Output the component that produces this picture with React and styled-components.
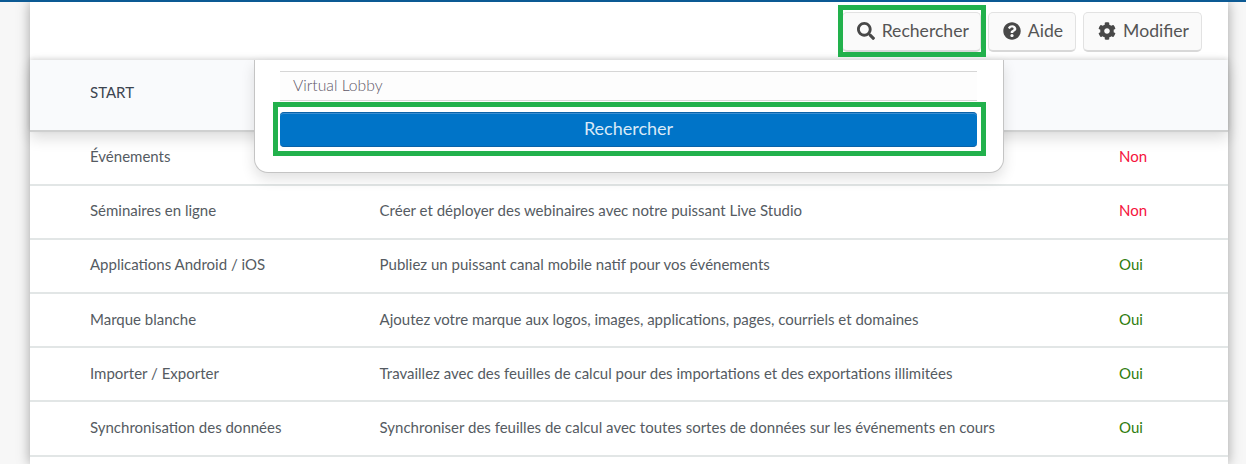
import React from 'react';
import styled, { createGlobalStyle } from 'styled-components';
import { FaSearch, FaQuestionCircle, FaCog } from 'react-icons/fa';

const GlobalStyle = createGlobalStyle`
    html, body {
        margin: 0;
        height: 100%;
        overflow: hidden;
        background: #f7f7f7;
        font-family: Lato, "Open Sans", sans-serif;
    }
`;

const Page = styled.div`
    width: 1246px;
    height: 464px;
    overflow: hidden;
    border-top: 2px solid #0c5a94;
    box-sizing: border-box;
    padding-left: 30px;
`;

const Card = styled.div`
    position: relative;
    width: 1198px;
    height: 462px;
    background: #fff;
    box-shadow: 0 0 12px rgba(0, 0, 0, 0.35);
`;

const Toolbar = styled.div`
    height: 58px;
    box-sizing: border-box;
    display: flex;
    justify-content: flex-end;
    align-items: flex-start;
    gap: 7px;
    padding: 10px 26px 0 0;
`;

const ToolButton = styled.button`
    height: 40px;
    padding: 0 ${(p) => (p.$compact ? '11px' : '12px')} 2px 14px;
    display: flex;
    align-items: center;
    gap: 7px;
    font: 17.6px Lato, sans-serif;
    color: #555;
    background: #fafafa;
    border: 1px solid #e2e2e2;
    border-bottom: 2px solid #d8d8d8;
    border-radius: 5px;
    svg {
        font-size: 18px;
        color: #484848;
    }
`;

const SearchHighlight = styled.div`
    position: absolute;
    left: 808px;
    top: 3px;
    width: 148px;
    height: 52px;
    border: 5px solid #22b14c;
    box-sizing: border-box;
    pointer-events: none;
`;

const HeadRow = styled.div`
    height: 71.5px;
    box-sizing: border-box;
    display: flex;
    align-items: center;
    padding: 0 0 5px 60px;
    font-size: 15px;
    color: #3c4450;
    background: #f9fafc;
    border-bottom: 2px solid #cfd0d0;
    box-shadow: 0 -2px 4px rgba(0, 0, 0, 0.1), 0 6px 14px rgba(0, 0, 0, 0.14);
    position: relative;
`;

const Row = styled.div`
    height: 54.2px;
    box-sizing: border-box;
    display: grid;
    grid-template-columns: 289.6px 739.4px 1fr;
    align-items: center;
    padding: 0 0 3px 60px;
    font-size: 15px;
    color: #555b62;
    border-bottom: 2px solid #e2e6e6;
`;

const Status = styled.span`
    color: ${(p) => (p.$yes ? '#2f7d0e' : '#f5143c')};
`;

const Popup = styled.div`
    position: absolute;
    left: 224px;
    top: 58px;
    width: 750px;
    height: 113px;
    box-sizing: border-box;
    padding: 11px 26px 0 25px;
    background: #fff;
    border: 1px solid #c4c4c4;
    border-top: none;
    border-radius: 0 0 14px 14px;
    box-shadow: 0 6px 14px rgba(0, 0, 0, 0.12);
`;

const LobbyField = styled.div`
    height: 30px;
    box-sizing: border-box;
    padding: 0 0 2px 13px;
    display: flex;
    align-items: center;
    font-size: 15.7px;
    font-weight: 300;
    color: #5f5868;
    background: #fdfdfd;
    border-top: 1px solid #d6d6d6;
    border-bottom: 1px solid #d6d6d6;
`;

const ButtonFrame = styled.div`
    margin: 1px -9px 0 -7px;
    padding: 5px 4px 4px 2px;
    border: 5px solid #22b14c;
    height: 54px;
    box-sizing: border-box;
    background: #fff;
`;

const PrimaryButton = styled.button`
    display: block;
    width: 100%;
    height: 35px;
    padding: 0 0 3px;
    font: 400 18px Lato, sans-serif;
    color: #d9e9f7;
    background: #0074c8;
    border: none;
    border-top: 1px solid #0a62a8;
    border-bottom: 1px solid #0a62a8;
    border-radius: 4px;
    box-shadow: inset 0 1px 0 #3d8fd2;
`;

const rows = [
    ['Événements', '', false],
    ['Séminaires en ligne', 'Créer et déployer des webinaires avec notre puissant Live Studio', false],
    ['Applications Android / iOS', 'Publiez un puissant canal mobile natif pour vos événements', true],
    ['Marque blanche', 'Ajoutez votre marque aux logos, images, applications, pages, courriels et domaines', true],
    ['Importer / Exporter', 'Travaillez avec des feuilles de calcul pour des importations et des exportations illimitées', true],
    ['Synchronisation des données', 'Synchroniser des feuilles de calcul avec toutes sortes de données sur les événements en cours', true],
];

export default function App() {
    return (
        <Page>
            <GlobalStyle />
            <Card>
                <Toolbar>
                    <ToolButton $compact><FaSearch />Rechercher</ToolButton>
                    <ToolButton><FaQuestionCircle />Aide</ToolButton>
                    <ToolButton><FaCog />Modifier</ToolButton>
                </Toolbar>
                <HeadRow>START</HeadRow>
                {rows.map(([name, desc, yes]) => (
                    <Row key={name}>
                        <span>{name}</span>
                        <span>{desc}</span>
                        <Status $yes={yes}>{yes ? 'Oui' : 'Non'}</Status>
                    </Row>
                ))}
                <Popup>
                    <LobbyField>Virtual Lobby</LobbyField>
                    <ButtonFrame>
                        <PrimaryButton>Rechercher</PrimaryButton>
                    </ButtonFrame>
                </Popup>
                <SearchHighlight />
            </Card>
        </Page>
    );
}
